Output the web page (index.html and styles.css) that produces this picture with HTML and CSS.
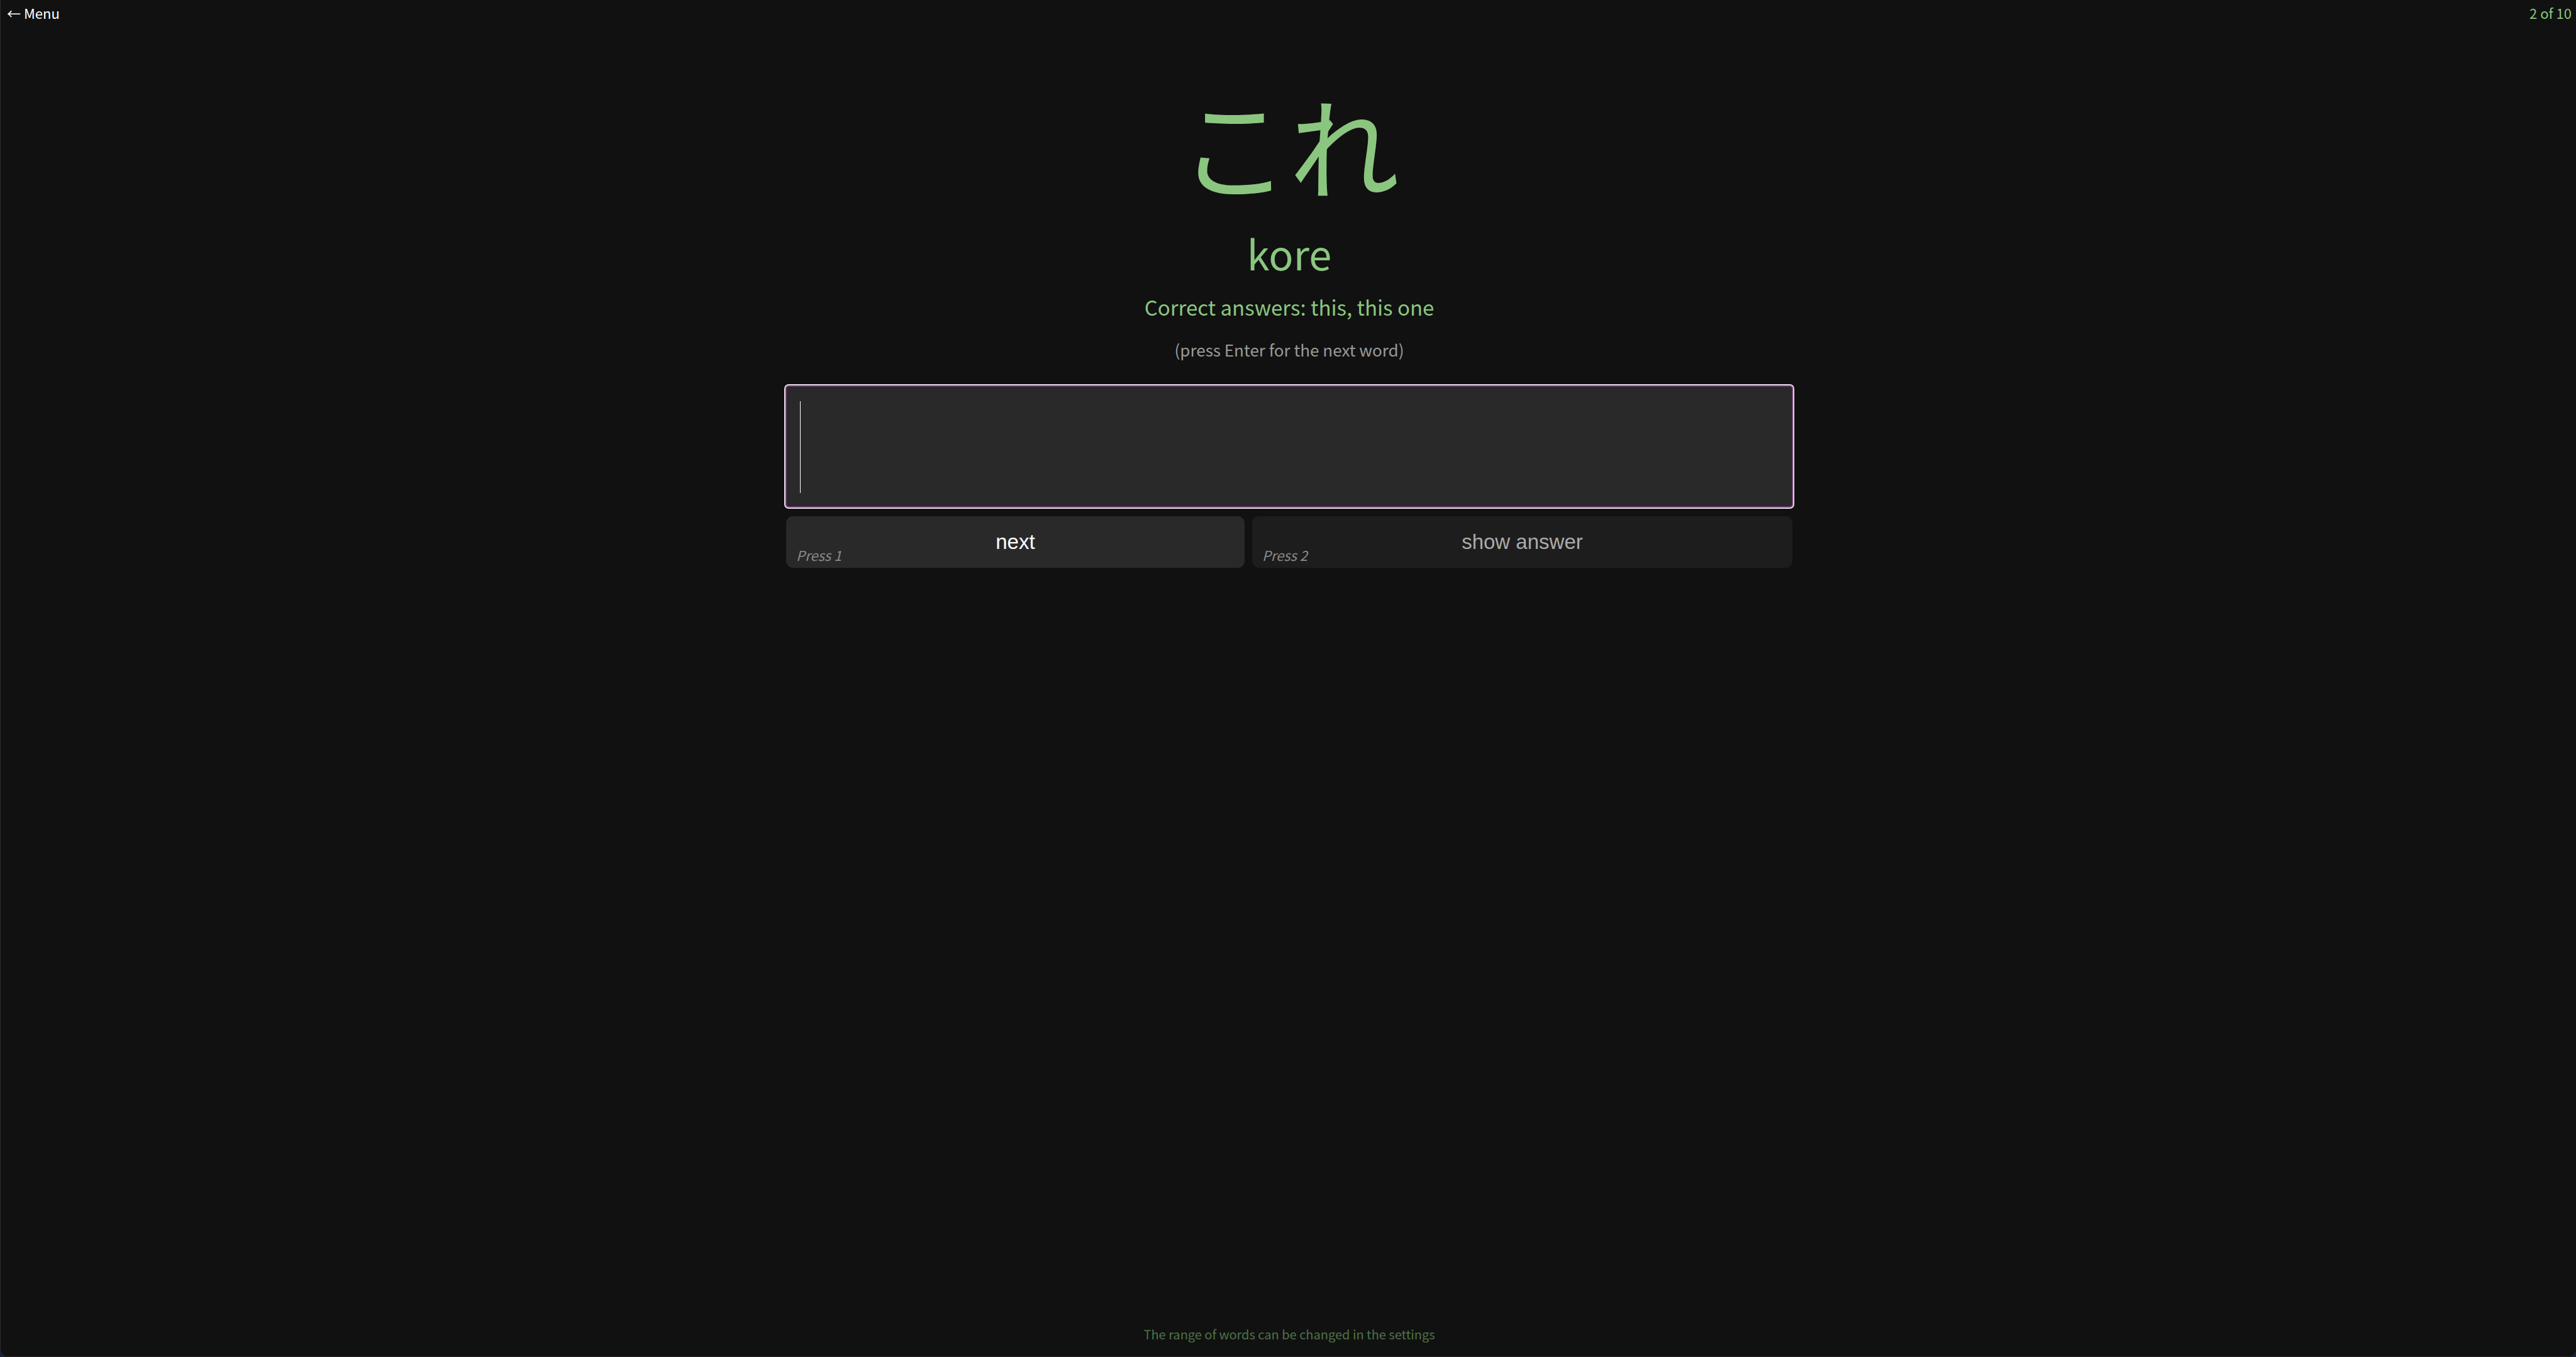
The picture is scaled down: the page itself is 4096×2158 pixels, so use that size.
FILE: index.html
```html
<!DOCTYPE html>
<html lang="en">
<head>
<meta charset="utf-8">
<title>Words</title>
<link rel="stylesheet" href="styles.css">
</head>
<body>
<div class="window">
  <header class="topbar">
    <a class="menu" href="#menu">← Menu</a>
    <span class="progress">2 of 10</span>
  </header>
  <main class="quiz">
    <h1 class="word" lang="ja">これ</h1>
    <p class="reading">kore</p>
    <p class="answers">Correct answers: this, this one</p>
    <p class="hint">(press Enter for the next word)</p>
    <div class="field">
      <input class="answer" type="text" aria-label="Answer" autocomplete="off">
      <span class="caret"></span>
    </div>
    <div class="actions">
      <button class="action" type="button">next<span class="shortcut">Press 1</span></button>
      <button class="action action-muted" type="button">show answer<span class="shortcut">Press 2</span></button>
    </div>
  </main>
  <footer class="note">The range of words can be changed in the settings</footer>
</div>
</body>
</html>
```
FILE: styles.css
```css
* { box-sizing: border-box; }
html { background: #1b2238; }
body {
  margin: 0;
  font-family: "Noto Sans CJK JP", "Noto Sans", sans-serif;
  font-size: 22px;
  line-height: 32px;
  color: #fff;
}
.window {
  min-height: 100vh;
  display: flex;
  flex-direction: column;
  padding-left: 3px;
  background: #111;
  border-left: 1px solid #2c2c2c;
  border-bottom: 1px solid #2c2626;
  border-radius: 0 0 12px 12px;
}
.topbar {
  display: flex;
  justify-content: space-between;
  padding: 4px 7px 0;
}
.menu { color: #fff; text-decoration: none; }
.progress { color: #8bc680; }
.quiz {
  flex: 1;
  width: 100%;
  max-width: 1600px;
  margin: 0 auto;
  display: flex;
  flex-direction: column;
  text-align: center;
}
.word, .reading, .answers, .hint { margin: 0; color: #8bc680; }
.word { margin-top: 65px; font-size: 175px; line-height: 254px; font-weight: 400; }
.reading { font-size: 65px; line-height: 94px; }
.answers { font-size: 33px; line-height: 48px; margin-top: 15px; }
.hint { font-size: 26px; line-height: 38px; margin-top: 25px; color: #999; }
.field { position: relative; margin-top: 39px; }
.answer {
  display: block;
  width: 100%;
  height: 192px;
  padding: 0 20px;
  font: 100px "Noto Sans CJK JP", sans-serif;
  color: #fff;
  background: #292929;
  border: 1px solid #5b2a61;
  border-radius: 4px;
  outline: none;
  box-shadow: 0 0 0 1px #925f96, 0 0 0 2px #c8a6ca, 0 0 0 3px #fff;
}
.caret {
  position: absolute;
  left: 22px;
  top: 24px;
  bottom: 22px;
  width: 1px;
  background: #fff;
}
.actions { display: flex; gap: 12px; margin-top: 15px; }
.action {
  position: relative;
  flex: 1 1 auto;
  height: 82px;
  padding: 0;
  border: 0;
  border-radius: 11px;
  background: #292929;
  color: #fff;
  font: 33px "Liberation Sans", sans-serif;
}
.action-muted { background: #1d1d1d; color: #aaa; }
.shortcut {
  position: absolute;
  left: 16px;
  bottom: 5px;
  font: italic 22px/32px "Noto Sans CJK JP", sans-serif;
  color: #8a8a8a;
}
.note { padding-bottom: 20px; text-align: center; font-size: 20px; line-height: 30px; color: #4e7248; }
```
